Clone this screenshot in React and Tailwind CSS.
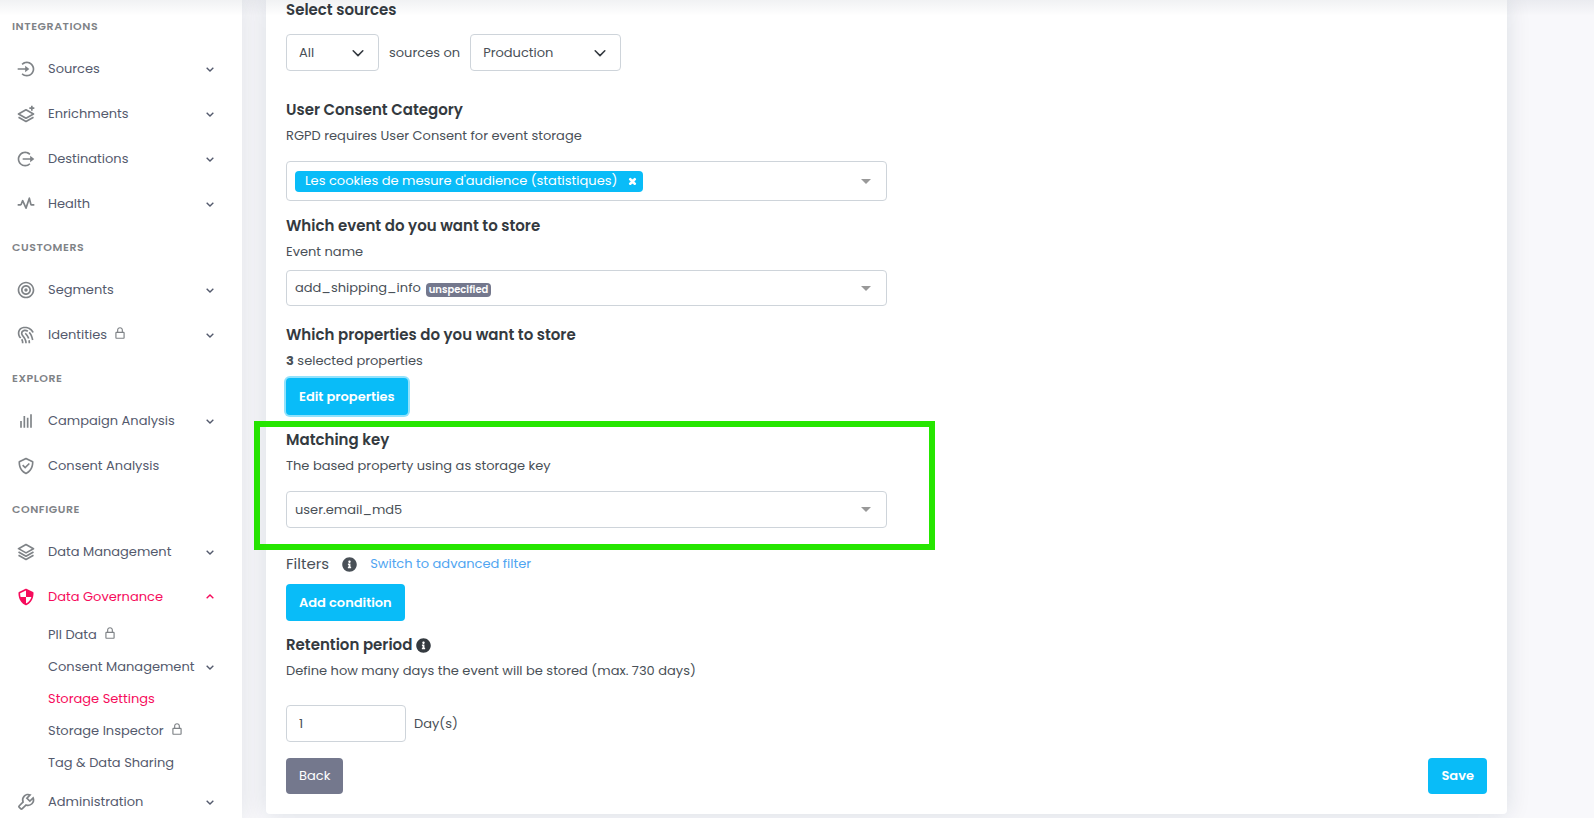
import { useState } from "react";
import {
  BiBarChart,
  BiBullseye,
  BiCheckShield,
  BiChevronDown,
  BiChevronUp,
  BiFingerprint,
  BiLayer,
  BiLayerPlus,
  BiLockAlt,
  BiLogInCircle,
  BiLogOutCircle,
  BiPulse,
  BiShieldQuarter,
  BiWrench,
} from "react-icons/bi";
import { FaInfoCircle, FaTimes } from "react-icons/fa";
import clsx from "clsx";

const menu = [
  {
    title: "Integrations",
    items: [
      { label: "Sources", icon: BiLogInCircle, expandable: true },
      { label: "Enrichments", icon: BiLayerPlus, expandable: true },
      { label: "Destinations", icon: BiLogOutCircle, flip: true, expandable: true },
      { label: "Health", icon: BiPulse, expandable: true },
    ],
  },
  {
    title: "Customers",
    items: [
      { label: "Segments", icon: BiBullseye, expandable: true },
      { label: "Identities", icon: BiFingerprint, locked: true, expandable: true },
    ],
  },
  {
    title: "Explore",
    items: [
      { label: "Campaign Analysis", icon: BiBarChart, expandable: true },
      { label: "Consent Analysis", icon: BiCheckShield },
    ],
  },
  {
    title: "Configure",
    items: [
      { label: "Data Management", icon: BiLayer, expandable: true },
      {
        label: "Data Governance",
        icon: BiShieldQuarter,
        expandable: true,
        active: true,
        children: [
          { label: "PII Data", locked: true },
          { label: "Consent Management", expandable: true },
          { label: "Storage Settings", active: true },
          { label: "Storage Inspector", locked: true },
          { label: "Tag & Data Sharing" },
        ],
      },
      { label: "Administration", icon: BiWrench, expandable: true },
    ],
  },
];

const Lock = () => <BiLockAlt size={14} className="mb-1 ml-1.5 text-[#7f8387]" />;

const SubItem = ({ item }) => (
  <li>
    <a
      href="#"
      className={clsx(
        "flex h-8 items-center pr-6 pl-12 whitespace-nowrap",
        item.active ? "text-[#f60c5c]" : "text-[#545a6d]"
      )}
    >
      {item.label}
      {item.locked && <Lock />}
      {item.expandable && <BiChevronDown size={16} className="ml-auto" />}
    </a>
  </li>
);

const MenuItem = ({ item }) => {
  const Icon = item.icon;
  const Chevron = item.active ? BiChevronUp : BiChevronDown;

  return (
    <li>
      <a
        href="#"
        className={clsx("flex h-[45px] items-center pr-6 pl-4", item.active ? "text-[#f60c5c]" : "text-[#545a6d]")}
      >
        <Icon
          size={20}
          className={clsx("mr-3 shrink-0", !item.active && "text-[#7f8387]", item.flip && "rotate-180")}
        />
        {item.label}
        {item.locked && <Lock />}
        {item.expandable && <Chevron size={16} className="ml-auto" />}
      </a>
      {item.children && (
        <ul>
          {item.children.map((child) => (
            <SubItem key={child.label} item={child} />
          ))}
        </ul>
      )}
    </li>
  );
};

const Sidebar = () => (
  <nav className="z-10 flex w-[242px] shrink-0 flex-col gap-px overflow-hidden bg-white pt-1.5 shadow-[0_0_24px_rgba(18,38,63,0.10)]">
    {menu.map((group) => (
      <div key={group.title}>
        <h2 className="flex h-10 items-center px-3 text-[11px] font-semibold tracking-wider text-[#7f8387] uppercase">
          {group.title}
        </h2>
        <ul>
          {group.items.map((item) => (
            <MenuItem key={item.label} item={item} />
          ))}
        </ul>
      </div>
    ))}
  </nav>
);

const Heading = ({ children, id, className = "leading-6" }) => (
  <h3 id={id} className={clsx("flex items-center gap-1 text-[15px] font-semibold text-[#343a40]", className)}>
    {children}
  </h3>
);

const Select = ({ label, options, className }) => (
  <label className={clsx("relative block", className)}>
    <select
      aria-label={label}
      className="h-[37px] w-full appearance-none rounded border border-[#ced4da] bg-white px-3 text-[#495057]"
    >
      {options.map((option) => (
        <option key={option}>{option}</option>
      ))}
    </select>
    <svg viewBox="0 0 16 16" className="pointer-events-none absolute top-3 right-3.5 h-3.5 w-3.5">
      <path d="M2.5 5.5l5.5 5.5 5.5-5.5" fill="none" stroke="#343a40" strokeWidth="1.8" strokeLinecap="round" strokeLinejoin="round" />
    </svg>
  </label>
);

const Caret = () => <span className="ml-auto border-x-5 border-t-5 border-x-transparent border-t-[#999]" />;

const Button = ({ className, children, ...props }) => (
  <button type="button" className={clsx("rounded px-[13px] text-white", className)} {...props}>
    {children}
  </button>
);

const App = () => {
  const [consents, setConsents] = useState(["Les cookies de mesure d'audience (statistiques)"]);
  const [days, setDays] = useState("1");

  return (
    <div className="relative flex h-screen overflow-hidden bg-[#f8f8fb] font-['Poppins','Open_Sans',sans-serif] text-[13px] text-[#495057]">
      <Sidebar />

      <main className="min-w-0 flex-1 pr-[87px] pl-6">
        <form className="rounded-b bg-white px-5 pb-5 shadow-[0_0_24px_rgba(18,38,63,0.12)]">
          <Heading className="leading-5">Select sources</Heading>
          <div className="mt-3.5 flex items-center">
            <Select label="Source scope" options={["All", "Some"]} className="w-[93px]" />
            <span className="mx-2.5">sources on</span>
            <Select label="Environment" options={["Production", "Staging"]} className="w-[151px]" />
          </div>

          <section className="mt-[27px] w-1/2">
            <Heading id="consent">User Consent Category</Heading>
            <p className="mt-1 leading-5">RGPD requires User Consent for event storage</p>
            <div
              role="group"
              aria-labelledby="consent"
              className="mt-[15px] flex h-10 items-center rounded border border-[#ced4da] pr-[15px] pl-2"
            >
              {consents.map((consent) => (
                <span key={consent} className="flex h-[21px] items-center rounded bg-[#09bcf8] pr-1.5 pl-2.5 text-white">
                  {consent}
                  <button
                    type="button"
                    aria-label={`Remove ${consent}`}
                    className="ml-[11px]"
                    onClick={() => setConsents(consents.filter((c) => c !== consent))}
                  >
                    <FaTimes size={9} stroke="currentColor" strokeWidth={60} />
                  </button>
                </span>
              ))}
              <Caret />
            </div>
          </section>

          <section className="mt-[13px] w-1/2">
            <Heading>Which event do you want to store</Heading>
            <p id="event-name" className="mt-1 leading-5">
              Event name
            </p>
            <button
              type="button"
              aria-haspopup="listbox"
              aria-labelledby="event-name"
              className="mt-2 flex h-9 w-full items-center rounded border border-[#ced4da] pr-[15px] pl-2"
            >
              add_shipping_info
              <span className="mt-1 ml-[5px] rounded bg-[#74788d] px-[3px] text-[10px] leading-[14px] font-semibold text-white">
                unspecified
              </span>
              <Caret />
            </button>
          </section>

          <section className="mt-[17px]">
            <Heading>Which properties do you want to store</Heading>
            <p className="mt-1 leading-5">
              <b className="font-bold">3</b> selected properties
            </p>
            <Button className="mt-[7px] h-[37px] bg-[#09bcf8] font-semibold ring-2 ring-[#92e2fc]">
              Edit properties
            </Button>
          </section>

          <section className="relative mt-[13px] w-1/2">
            <Heading id="matching-key">Matching key</Heading>
            <p className="mt-1 leading-5">The based property using as storage key</p>
            <button
              type="button"
              aria-haspopup="listbox"
              aria-describedby="matching-key"
              className="mt-[15px] flex h-[37px] w-full items-center rounded border border-[#ced4da] pr-[15px] pl-2"
            >
              user.email_md5
              <Caret />
            </button>
            <div className="pointer-events-none absolute -top-[7px] -right-12 -bottom-[22px] -left-8 border-6 border-[#26e600]" />
          </section>

          <section className="mt-6">
            <div className="flex items-center leading-6">
              <span className="text-[15px]">Filters</span>
              <FaInfoCircle size={15} className="ml-[13px]" />
              <a href="#" className="ml-[13px] text-[#50a5f1]">
                Switch to advanced filter
              </a>
            </div>
            <Button className="mt-2 h-[37px] bg-[#09bcf8] font-semibold">Add condition</Button>
          </section>

          <section className="mt-3">
            <Heading>
              Retention period <FaInfoCircle size={15} />
            </Heading>
            <p className="mt-1 leading-5">Define how many days the event will be stored (max. 730 days)</p>
            <label className="mt-6 flex items-center gap-2">
              <input
                type="text"
                inputMode="numeric"
                value={days}
                onChange={(e) => setDays(e.target.value)}
                className="h-[37px] w-[120px] rounded border border-[#ced4da] px-3"
              />
              Day(s)
            </label>
          </section>

          <div className="mt-4 flex justify-between">
            <Button className="h-9 bg-[#74788d]">Back</Button>
            <Button className="h-9 bg-[#09bcf8] font-semibold">Save</Button>
          </div>
        </form>
      </main>

      {/* shadow of the fixed top bar */}
      <div className="pointer-events-none absolute inset-x-0 top-0 z-20 h-4 bg-linear-to-b from-[#12263f]/6 to-transparent" />
    </div>
  );
};

export default App;
